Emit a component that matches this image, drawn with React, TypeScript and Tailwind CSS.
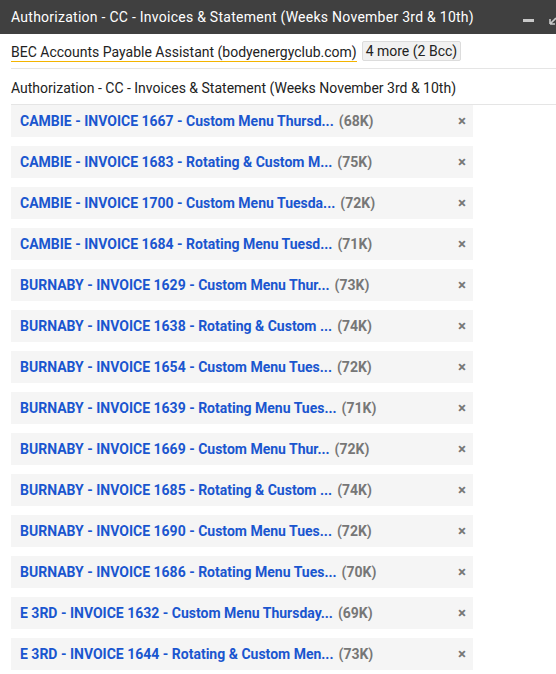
import React from "react"

const files = [
  { name: "CAMBIE - INVOICE 1667 - Custom Menu Thursd...", size: "68K" },
  { name: "CAMBIE - INVOICE 1683 - Rotating & Custom M...", size: "75K" },
  { name: "CAMBIE - INVOICE 1700 - Custom Menu Tuesda...", size: "72K" },
  { name: "CAMBIE - INVOICE 1684 - Rotating Menu Tuesd...", size: "71K" },
  { name: "BURNABY - INVOICE 1629 - Custom Menu Thur...", size: "73K" },
  { name: "BURNABY - INVOICE 1638 - Rotating & Custom ...", size: "74K" },
  { name: "BURNABY - INVOICE 1654 - Custom Menu Tues...", size: "72K" },
  { name: "BURNABY - INVOICE 1639 - Rotating Menu Tues...", size: "71K" },
  { name: "BURNABY - INVOICE 1669 - Custom Menu Thur...", size: "72K" },
  { name: "BURNABY - INVOICE 1685 - Rotating & Custom ...", size: "74K" },
  { name: "BURNABY - INVOICE 1690 - Custom Menu Tues...", size: "72K" },
  { name: "BURNABY - INVOICE 1686 - Rotating Menu Tues...", size: "70K" },
  { name: "E 3RD - INVOICE 1632 - Custom Menu Thursday...", size: "69K" },
  { name: "E 3RD - INVOICE 1644 - Rotating & Custom Men...", size: "73K" },
]

export default function App() {
  return (
    <div className="w-[556px] h-[674px] overflow-hidden bg-white font-['Roboto',sans-serif] text-[14px]">
      {/* Compose header */}
      <div className="h-[34px] bg-[#404040] pl-[11px] flex items-center justify-between">
        <span className="text-white text-[14px] tracking-[0.26px]">
          Authorization - CC - Invoices &amp; Statement (Weeks November 3rd &amp; 10th)
        </span>
        <div className="flex items-center gap-[14px] mr-[-10px]">
          <div className="w-[11px] h-[3px] bg-[#c8c8c8] mt-[6px]" />
          <svg width="18" height="18" viewBox="0 0 18 18" className="text-[#c8c8c8]">
            <path d="M2 16 L8 10 M2 16 L2 11 M2 16 L7 16 M16 2 L10 8 M16 2 L11 2 M16 2 L16 7" stroke="currentColor" strokeWidth="1.6" fill="none" />
          </svg>
        </div>
      </div>

      <div className="pl-[11px]">
        {/* Recipients */}
        <div className="h-[35px] flex items-center gap-[5px] border-b border-[#e5e5e5] text-[#222]">
          <span className="border-b border-[#f4b400] leading-[18px] mt-[3px]">
            BEC Accounts Payable Assistant (bodyenergyclub.com)
          </span>
          <span className="bg-[#f1f1f1] border border-[#dcdcdc] rounded-[2px] px-[3px] leading-[18px]">
            4 more (2 Bcc)
          </span>
        </div>

        {/* Subject */}
        <div className="h-[36px] pt-[3px] flex items-center border-b border-[#e5e5e5] text-[#222]">
          Authorization - CC - Invoices &amp; Statement (Weeks November 3rd &amp; 10th)
        </div>

        {/* Attachments */}
        <div className="w-[462px] flex flex-col gap-[9px]">
          {files.map((f) => (
            <div key={f.name} className="h-[32px] bg-[#f5f5f5] flex items-center pl-[9px] pr-[4px]">
              <span className="font-bold text-[#1a56cf] whitespace-nowrap">{f.name}</span>
              <span className="font-bold text-[#777] ml-[5px]">({f.size})</span>
              <span className="ml-auto w-[14px] text-center font-bold text-[#777] text-[15px]">×</span>
            </div>
          ))}
        </div>
      </div>
    </div>
  )
}
